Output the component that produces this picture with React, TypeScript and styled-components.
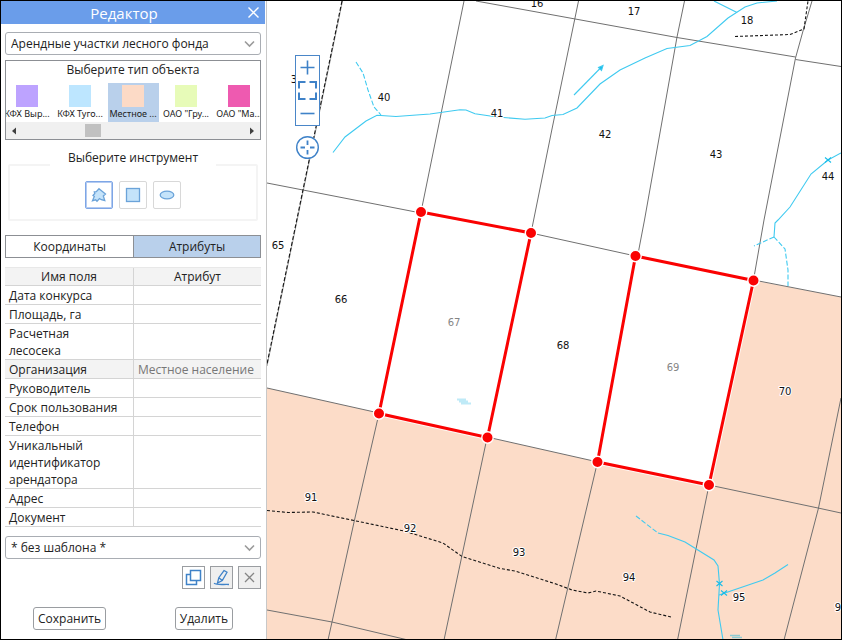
import React, { useState } from "react";
import styled, { createGlobalStyle } from "styled-components";

const GlobalStyle = createGlobalStyle`
  * { box-sizing: border-box; }
  body { margin: 0; background: #fff; }
  body, button, select, input { font-family: "Open Sans", "Noto Sans", sans-serif; }
`;

const Window = styled.div`
  display: flex;
  min-height: 100vh;
  border: 1px solid #000;
  color: #222;
  font-size: 12px;
  line-height: 17px;
`;

const Panel = styled.aside`
  flex: none;
  display: flex;
  flex-direction: column;
  width: 266px;
  padding-right: 1px;
  border-right: 1px solid #c8c8c8;
`;

const TitleBar = styled.header`
  display: flex;
  align-items: center;
  height: 23px;
  padding: 0 5px 0 0;
  background: #6a9dea;
  color: #fff;
`;

const Title = styled.h1`
  flex: 1;
  margin: 0;
  font-size: 15px;
  font-weight: 400;
  line-height: 22px;
  text-align: center;
`;

const CloseButton = styled.button`
  display: flex;
  padding: 0;
  border: 0;
  background: none;
  color: #fff;
`;

const Body = styled.div`
  display: flex;
  flex-direction: column;
  padding: 8px 4px 0;
`;

const SelectBox = styled.label`
  display: grid;
  align-items: center;
  & > * { grid-area: 1 / 1; }
  & > svg { justify-self: end; margin-right: 6px; pointer-events: none; }
`;

const Select = styled.select`
  appearance: none;
  width: 100%;
  height: 23px;
  padding: 0 20px 0 5px;
  border: 1px solid #a9adb3;
  border-radius: 3px;
  background: #fff;
  color: #222;
  font-size: 12px;
`;

const TypeBox = styled.section`
  display: flex;
  flex-direction: column;
  height: 80px;
  margin-top: 5px;
  border: 1px solid #8c8f94;
`;

const TypeTitle = styled.h2`
  margin: 0;
  padding: 0 0 5px;
  font-size: 12px;
  font-weight: 400;
  text-align: center;
`;

const TypeList = styled.div`
  display: flex;
  justify-content: center;
  gap: 2px;
  overflow: hidden;
`;

const TypeItem = styled.button<{ $active: boolean }>`
  flex: none;
  display: flex;
  flex-direction: column;
  align-items: center;
  width: 51px;
  height: 39px;
  padding: 2px 0 0;
  border: 0;
  background: ${(p) => (p.$active ? "#b9d0eb" : "none")};
  color: #222;
  font-family: "Noto Sans", "Open Sans", sans-serif;
  font-size: 9px;
  line-height: 14px;
  white-space: nowrap;
`;

const Swatch = styled.span<{ $color: string }>`
  width: 22px;
  height: 22px;
  background: ${(p) => p.$color};
`;

const ScrollTrack = styled.div`
  display: flex;
  align-items: center;
  flex: 1;
  padding: 0 5px;
  background: #f0f0f0;
`;

const ScrollSpace = styled.div`
  flex: 1;
  display: flex;
  padding-left: 28%;
`;

const ScrollThumb = styled.div`
  width: 16px;
  height: 13px;
  background: #c1c1c1;
`;

const Tools = styled.fieldset`
  display: flex;
  justify-content: center;
  gap: 6px;
  min-width: 0;
  margin: 9px 3px 0;
  padding: 0 0 10px;
  border: 2px solid #f4f4f4;
  border-radius: 2px;
`;

const ToolsLegend = styled.legend`
  margin: 0 auto;
  padding: 0 18px 15px;
`;

const ToolButton = styled.button<{ $active: boolean }>`
  display: flex;
  align-items: center;
  justify-content: center;
  width: 28px;
  height: 28px;
  padding: 0;
  border: 1px solid ${(p) => (p.$active ? "#7ea6e6" : "#d8d8d8")};
  border-radius: 2px;
  background: #fff;
  box-shadow: ${(p) => (p.$active ? "inset 0 0 0 1px #b4cbf1" : "none")};
`;

const Tabs = styled.div`
  display: grid;
  grid-template-columns: 1fr 1fr;
  height: 23px;
  margin-top: 14px;
  border: 1px solid #8c8f94;
`;

const Tab = styled.button<{ $active: boolean }>`
  padding: 0;
  border: 0;
  background: ${(p) => (p.$active ? "#b9d0eb" : "#fff")};
  color: #222;
  font-size: 12px;
  & + & { border-left: 1px solid #8c8f94; }
`;

const Table = styled.table`
  width: 100%;
  margin-top: 9px;
  border-collapse: separate;
  border-spacing: 0;
  border-top: 1px solid #e8e8e8;
  table-layout: fixed;
`;

const cell = `
  height: 19px;
  padding: 1px 4px 0;
  border-bottom: 1px solid #d4d4d4;
  font-weight: 400;
  & + td, & + th { border-left: 1px solid #d4d4d4; }
`;

const HeadCell = styled.th`
  ${cell}
  height: 18px;
  padding: 0;
  background: #f3f3f3;
  text-align: center;
`;

const NameCell = styled.th<{ $shaded: boolean }>`
  ${cell}
  padding-right: 12px;
  background: ${(p) => (p.$shaded ? "#f3f3f3" : "#fff")};
  text-align: left;
`;

const ValueCell = styled.td<{ $shaded: boolean }>`
  ${cell}
  background: ${(p) => (p.$shaded ? "#f3f3f3" : "#fff")};
  color: #777;
  white-space: nowrap;
`;

const TemplateRow = styled.div`
  margin-top: 9px;
`;

const IconRow = styled.div`
  display: flex;
  justify-content: flex-end;
  gap: 5px;
  margin-top: 7px;
`;

const IconButton = styled.button<{ $filled: boolean }>`
  display: flex;
  align-items: center;
  justify-content: center;
  width: 23px;
  height: 23px;
  padding: 0;
  border: 1px solid #9a9da1;
  background: ${(p) => (p.$filled ? "#efefef" : "#fff")};
`;

const Actions = styled.div`
  display: flex;
  justify-content: space-between;
  margin-top: 18px;
  padding: 0 28px;
`;

const ActionButton = styled.button`
  height: 23px;
  padding: 0 4px;
  border: 1px solid #9a9da1;
  border-radius: 3px;
  background: #fff;
  color: #222;
  font-size: 12px;
`;

const MapArea = styled.main`
  position: relative;
  flex: 1;
  min-width: 0;
  overflow: hidden;
`;

const MapSvg = styled.svg`
  position: absolute;
  inset: 0;
  width: 100%;
  height: 100%;
  text {
    font-family: "DejaVu Sans", sans-serif;
    font-size: 10px;
    text-anchor: middle;
    paint-order: stroke;
    stroke: #fff;
    stroke-width: 2px;
    stroke-linejoin: round;
  }
`;

const MapControls = styled.div`
  position: absolute;
  top: 54px;
  left: 28px;
  display: flex;
  flex-direction: column;
  align-items: center;
  gap: 10px;
`;

const ZoomGroup = styled.div`
  display: flex;
  flex-direction: column;
  border: 1px solid #4a86c8;
  background: #fff;
`;

const MapButton = styled.button<{ $round?: boolean }>`
  display: flex;
  align-items: center;
  justify-content: center;
  width: 23px;
  height: 23px;
  padding: 0;
  border: 0;
  border-radius: ${(p) => (p.$round ? "50%" : "0")};
  background: #fff;
`;

const Chevron = () => (
  <svg width="11" height="8" viewBox="0 0 11 8" fill="none" stroke="#9b9b9b" strokeWidth="1.6">
    <path d="M1 1.5L5.5 6L10 1.5" />
  </svg>
);

const types = [
  { label: "КФХ Выр...", color: "#bda3ff" },
  { label: "КФХ Туго...", color: "#bde6ff" },
  { label: "Местное ...", color: "#fcdac6" },
  { label: 'ОАО "Гру...', color: "#e7fbb8" },
  { label: 'ОАО "Ма...', color: "#ee5ab0" },
];

const fields = [
  ["Дата конкурса", ""],
  ["Площадь, га", ""],
  ["Расчетная лесосека", ""],
  ["Организация", "Местное население"],
  ["Руководитель", ""],
  ["Срок пользования", ""],
  ["Телефон", ""],
  ["Уникальный идентификатор арендатора", ""],
  ["Адрес", ""],
  ["Документ", ""],
];

const labels: [string, number, number][] = [
  ["16", 537, 3], ["17", 634, 11], ["18", 747, 20], ["39", 297, 79],
  ["40", 384, 97], ["41", 497, 113], ["42", 605, 134], ["43", 716, 154],
  ["44", 828, 176], ["65", 278, 245], ["66", 341, 299], ["68", 563, 345],
  ["70", 785, 391], ["91", 311, 497], ["92", 410, 528], ["93", 519, 552],
  ["94", 629, 577], ["95", 739, 597], ["96", 841, 607],
];

const mutedLabels: [string, number, number][] = [["67", 454, 322], ["69", 673, 367]];

const plots = [
  [[421, 212], [531, 233], [487.5, 437.5], [379, 413.5]],
  [[635.5, 256], [753.5, 280.5], [709, 485], [597.5, 462]],
];

const Cross = ({ x, y }: { x: number; y: number }) => (
  <path d={`M${x - 3} ${y - 2.5}l6 5m0 -5l-6 5`} />
);

function ForestMap() {
  return (
    <MapSvg viewBox="267 1 574 638" preserveAspectRatio="xMinYMin slice" role="img" aria-label="Карта лесных кварталов">
      <path
        d="M267 388L379 413L487 437L598 462L709 485L753.5 280.5L841 297V640H267Z"
        fill="#fcdcc8"
      />
      <g fill="none" stroke="#707070" strokeWidth="1">
        <path d="M476 1L556 15.5L677 37.5L795.5 57M795.5 59.5L841 66.5" />
        <path d="M464 1L421 212M377.500 420L354.500 520L332 622L328 640" />
        <path d="M578.500 1L552 129L531 233M487 438L444 640" />
        <path d="M684.500 1L677 37L644.500 220L638 254M597.500 462L555.500 640" />
        <path d="M812 1L803 31L795.500 58L764 220L753.500 280M709 485L677.500 640" />
        <path d="M841 398L818.500 508L784 640" />
        <path d="M267 183L303 190L421 213L531 233L635.500 256L753.500 280L841 297" />
        <path d="M267 388L379 413L487 437L598 462L709 485L818 508L841 513" />
        <path d="M267 610L332 622L408 640" />
        <path d="M342.500 1L267 366" stroke="#a0a0a0" />
      </g>
      <g fill="none" stroke="#151515" strokeWidth="1.1" strokeDasharray="4 2">
        <path d="M342 1L267 364" />
        <g strokeDasharray="3 2">
          <path d="M735 36.5L790 34.500L804 29L808 1" />
          <path d="M267 510.500L288 512.500L313 512L354 520.500L404 531L443 543L462 556.500L500 568.500L515 571L556 584L572 590L588 593L596 591L620 596L650 612L671 617" />
        </g>
      </g>
      <g fill="none" stroke="#3fcaf0" strokeWidth="1.1">
        <path d="M333 152.500L345 137L366 121L377 115.300L396 116.500L430 114L460 109.800L466 110L475 113.800L497 117L525 119.300L545 118L552 115.500L563 114.500L577 108L600 84L620 70L645 58L667 48.500L690 45.500L707 36.500L728 18L745 7L757 3L777 1" />
        <path d="M714 1L737 12.500" />
        <path d="M574 95L601 67.500" />
        <path d="M603 65.500L601.500 70.500L598.500 67.500Z" fill="#18bce8" />
        <path d="M841 153L828 160L811 174L790 207L778 220L775 223L774 237" />
        <path d="M658 533L668 535.500L685 542L714 560L718 566L719.500 584L718 610L723 640" />
        <path d="M719 595L763 580L775 573L788 564.500" />
        <g strokeDasharray="5 2">
          <path d="M356 62L363 73L368 90L374 107L381 115" />
          <path d="M774 237L754 246M774 237L785 249L788 270V286" />
          <path d="M636 516L658 533" />
        </g>
        <g stroke="#18bce8">
          <Cross x={828} y={160} />
          <Cross x={719.5} y={583.5} />
          <Cross x={724} y={593} />
        </g>
      </g>
      <path d="M457 399.500H466M459 401.500H468M461 403.500H471" stroke="#bfeaf7" strokeWidth="2" />
      <path d="M730 635.500H740M732 637.500H742" stroke="#8fcbd2" strokeWidth="1.500" />
      <g fill="#111">
        {labels.map(([t, x, y]) => (
          <text key={t} x={x} y={y + 4}>{t}</text>
        ))}
      </g>
      <g fill="#858585">
        {mutedLabels.map(([t, x, y]) => (
          <text key={t} x={x} y={y + 4}>{t}</text>
        ))}
      </g>
      {plots.map((plot, i) => (
        <g key={i}>
          <polygon points={plot.join(" ")} fill="none" stroke="#fff" strokeOpacity="0.8" strokeWidth="5" />
          <polygon points={plot.join(" ")} fill="none" stroke="#fa0202" strokeWidth="3" />
          {plot.map(([x, y]) => (
            <circle key={x} cx={x} cy={y} r="5.700" fill="#fa0202" stroke="#fff" strokeWidth="1.400" />
          ))}
        </g>
      ))}
    </MapSvg>
  );
}

export default function App() {
  const [type, setType] = useState(2);
  const [tool, setTool] = useState(0);
  const [tab, setTab] = useState(1);
  const shape = { fill: "#c4e3fa", stroke: "#6ba3d9", strokeWidth: 1.3 };
  const tools = [
    { name: "Многоугольник", icon: <path d="M8 1.700L14.500 7L12.300 9L13.800 13.500L10.300 12.700L8.500 11.500L6 14.200L4.700 12.800L1.500 13.700L3.300 9.500L2 8.500L3.800 6.500L3.300 4.800L5.300 4.600Z" {...shape} /> },
    { name: "Прямоугольник", icon: <rect x="1.500" y="1.500" width="13" height="13" {...shape} /> },
    { name: "Эллипс", icon: <ellipse cx="8" cy="8" rx="6.800" ry="3.900" {...shape} /> },
  ];

  return (
    <>
      <GlobalStyle />
      <Window>
        <Panel>
          <TitleBar>
            <Title>Редактор</Title>
            <CloseButton aria-label="Закрыть">
              <svg width="13" height="13" viewBox="0 0 13 13" stroke="currentColor" strokeWidth="1.400">
                <path d="M1.500 1.500L11.500 11.500M11.500 1.500L1.500 11.500" />
              </svg>
            </CloseButton>
          </TitleBar>
          <Body>
            <SelectBox>
              <Select aria-label="Слой">
                <option>Арендные участки лесного фонда</option>
              </Select>
              <Chevron />
            </SelectBox>

            <TypeBox>
              <TypeTitle>Выберите тип объекта</TypeTitle>
              <TypeList>
                {types.map((t, i) => (
                  <TypeItem key={t.label} $active={i === type} onClick={() => setType(i)}>
                    <Swatch $color={t.color} />
                    {t.label}
                  </TypeItem>
                ))}
              </TypeList>
              <ScrollTrack>
                <svg width="6" height="8" viewBox="0 0 6 8"><path d="M5 0.500V7.500L1 4Z" fill="#404040" /></svg>
                <ScrollSpace><ScrollThumb /></ScrollSpace>
                <svg width="6" height="8" viewBox="0 0 6 8"><path d="M1 0.500V7.500L5 4Z" fill="#404040" /></svg>
              </ScrollTrack>
            </TypeBox>

            <Tools>
              <ToolsLegend>Выберите инструмент</ToolsLegend>
              {tools.map((t, i) => (
                <ToolButton key={t.name} aria-label={t.name} $active={i === tool} onClick={() => setTool(i)}>
                  <svg width="16" height="16" viewBox="0 0 16 16">{t.icon}</svg>
                </ToolButton>
              ))}
            </Tools>

            <Tabs role="tablist">
              {["Координаты", "Атрибуты"].map((t, i) => (
                <Tab key={t} role="tab" aria-selected={i === tab} $active={i === tab} onClick={() => setTab(i)}>
                  {t}
                </Tab>
              ))}
            </Tabs>

            <Table>
              <thead>
                <tr>
                  <HeadCell scope="col">Имя поля</HeadCell>
                  <HeadCell scope="col">Атрибут</HeadCell>
                </tr>
              </thead>
              <tbody>
                {fields.map(([name, value]) => (
                  <tr key={name}>
                    <NameCell scope="row" $shaded={value !== ""}>{name}</NameCell>
                    <ValueCell $shaded={value !== ""}>{value}</ValueCell>
                  </tr>
                ))}
              </tbody>
            </Table>

            <TemplateRow>
              <SelectBox>
                <Select aria-label="Шаблон">
                  <option>* без шаблона *</option>
                </Select>
                <Chevron />
              </SelectBox>
            </TemplateRow>

            <IconRow>
              <IconButton $filled={false} aria-label="Копировать">
                <svg width="17" height="17" viewBox="0 0 17 17" fill="none" stroke="#3f82c8" strokeWidth="1.500">
                  <path d="M5.500 1.500H15.500V11.500H5.500Z" />
                  <path d="M5.500 5.500H1.500V15.500H11.500V11.500" />
                </svg>
              </IconButton>
              <IconButton $filled aria-label="Изменить">
                <svg width="17" height="17" viewBox="0 0 17 17" fill="none" stroke="#3f82c8" strokeWidth="1.300">
                  <path d="M11 1.500L14 3.300L9.300 11.500L4.500 14L5.800 8.700ZM5.800 8.700L9.300 11.500M1 14.300C4 16.300 10 15.200 16 15.500" />
                </svg>
              </IconButton>
              <IconButton $filled aria-label="Очистить">
                <svg width="13" height="13" viewBox="0 0 13 13" stroke="#858585" strokeWidth="1.300">
                  <path d="M2 2L11 11M11 2L2 11" />
                </svg>
              </IconButton>
            </IconRow>

            <Actions>
              <ActionButton>Сохранить</ActionButton>
              <ActionButton>Удалить</ActionButton>
            </Actions>
          </Body>
        </Panel>

        <MapArea>
          <ForestMap />
          <MapControls>
            <ZoomGroup>
              <MapButton aria-label="Приблизить">
                <svg width="15" height="15" viewBox="0 0 15 15" stroke="#3f82c8" strokeWidth="1.600"><path d="M7.500 0.500V14.500M0.500 7.500H14.500" /></svg>
              </MapButton>
              <MapButton aria-label="Показать всё">
                <svg width="19" height="19" viewBox="0 0 19 19" fill="none" stroke="#3f82c8" strokeWidth="2">
                  <path d="M1 7.500V1H7.500M11.500 1H18V7.500M18 11.500V18H11.500M7.500 18H1V11.500" />
                </svg>
              </MapButton>
              <MapButton aria-label="Отдалить">
                <svg width="15" height="15" viewBox="0 0 15 15" stroke="#3f82c8" strokeWidth="1.600"><path d="M0.500 7.500H14.500" /></svg>
              </MapButton>
            </ZoomGroup>
            <MapButton $round aria-label="Моё местоположение">
              <svg width="23" height="23" viewBox="0 0 23 23" fill="none" stroke="#3f82c8" strokeWidth="1.400">
                <circle cx="11.500" cy="11.500" r="10.800" />
                <path d="M11.500 4.500V9M11.500 14V18.500M4.500 11.500H9M14 11.500H18.500" strokeWidth="1.800" />
              </svg>
            </MapButton>
          </MapControls>
        </MapArea>
      </Window>
    </>
  );
}
